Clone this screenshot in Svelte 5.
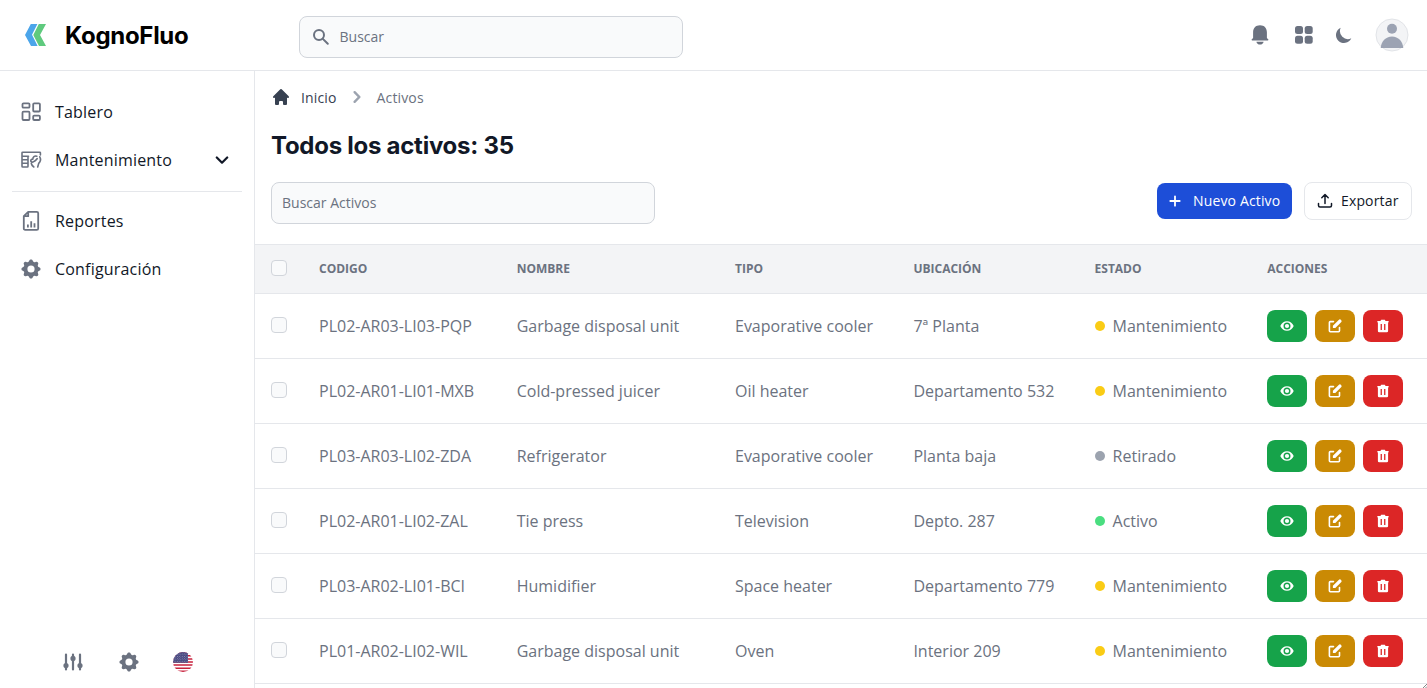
<script>
  const rows = [
    ['PL02-AR03-LI03-PQP', 'Garbage disposal unit', 'Evaporative cooler', '7ª Planta', 'Mantenimiento', 'yellow'],
    ['PL02-AR01-LI01-MXB', 'Cold-pressed juicer', 'Oil heater', 'Departamento 532', 'Mantenimiento', 'yellow'],
    ['PL03-AR03-LI02-ZDA', 'Refrigerator', 'Evaporative cooler', 'Planta baja', 'Retirado', 'gray'],
    ['PL02-AR01-LI02-ZAL', 'Tie press', 'Television', 'Depto. 287', 'Activo', 'green'],
    ['PL03-AR02-LI01-BCI', 'Humidifier', 'Space heater', 'Departamento 779', 'Mantenimiento', 'yellow'],
    ['PL01-AR02-LI02-WIL', 'Garbage disposal unit', 'Oven', 'Interior 209', 'Mantenimiento', 'yellow']
  ];
  const heads = ['Codigo', 'Nombre', 'Tipo', 'Ubicación', 'Estado', 'Acciones'];
  const gear = 'M11.49 3.17c-.38-1.56-2.6-1.56-2.98 0a1.532 1.532 0 01-2.286.948c-1.372-.836-2.942.734-2.106 2.106.54.886.061 2.042-.947 2.287-1.561.379-1.561 2.6 0 2.978a1.532 1.532 0 01.947 2.287c-.836 1.372.734 2.942 2.106 2.106a1.532 1.532 0 012.287.947c.379 1.561 2.6 1.561 2.978 0a1.533 1.533 0 012.287-.947c1.372.836 2.942-.734 2.106-2.106a1.533 1.533 0 01.947-2.287c1.561-.379 1.561-2.6 0-2.978a1.532 1.532 0 01-.947-2.287c.836-1.372-.734-2.942-2.106-2.106a1.532 1.532 0 01-2.287-.947zM10 13a3 3 0 100-6 3 3 0 000 6z';
</script>

{#snippet cog()}
  <svg class="i24" viewBox="0 0 20 20" fill="currentColor"><path fill-rule="evenodd" d={gear} /></svg>
{/snippet}

<div class="page">
  <header>
    <div class="brand">
      <svg class="logo" viewBox="0 0 22 22"><path fill="#4ba5ea" d="M5.800 0H12.400L7 10.700 12.600 22H6L0 11z" /><path fill="#5fca7e" d="M13.800 0H21l-6 11 6 11h-7L8.300 11z" /></svg>
      <span class="name">KognoFluo</span>
    </div>
    <div class="field search">
      <svg class="i20" viewBox="0 0 20 20" fill="none" stroke="#6b7280" stroke-width="2"><circle cx="8" cy="8" r="5" /><path d="M11.6 11.6l5.2 5.2" stroke-linecap="round" /></svg>
      <span>Buscar</span>
    </div>
    <div class="tools">
      <svg class="bell" viewBox="0 0 24 24" fill="currentColor"><path d="M12 2.200c-4.400 0-6.900 2.800-6.900 7v5.900l-1.300 1.200c-.5.500-.2 1.200.4 1.200h15.600c.6 0 .9-.7.4-1.200l-1.300-1.200V9.200c0-4.200-2.500-7-6.900-7zM8.400 18.700h7.200c-.3 1.800-1.700 2.900-3.600 2.900s-3.300-1.100-3.600-2.900z" /></svg>
      <svg class="grid" viewBox="0 0 18 18" fill="currentColor"><rect width="8" height="8" rx="2.500" /><rect x="9.700" width="8" height="8" rx="2.500" /><rect y="9.700" width="8" height="8" rx="2.500" /><rect x="9.700" y="9.700" width="8" height="8" rx="2.500" /></svg>
      <svg class="moon" viewBox="0 0 20 20" fill="currentColor"><path d="M17.293 13.293A8 8 0 016.707 2.707a8.001 8.001 0 1010.586 10.586z" /></svg>
      <svg class="avatar" viewBox="0 0 34 34"><circle cx="17" cy="17" r="16" fill="#f3f4f6" stroke="#e2e4e8" /><circle cx="17" cy="10.700" r="5" fill="#9ca3b3" /><path d="M5.700 30c.4-6.500 5-11.500 11.300-11.500s10.900 5 11.300 11.500z" fill="#9ca3b3" /></svg>
    </div>
  </header>

  <div class="body">
    <aside>
      <nav>
        <div class="item"><svg class="i24" viewBox="0 0 24 24" fill="none" stroke="currentColor" stroke-width="1.800"><rect x="3.500" y="3.300" width="7" height="4.400" rx="1" /><rect x="14.200" y="3.300" width="6.700" height="8.200" rx="1" /><rect x="3.500" y="11.700" width="7" height="8.300" rx="1" /><rect x="14.200" y="15.600" width="6.700" height="4.400" rx="1" /></svg><span>Tablero</span></div>
        <div class="item"><svg class="i24" viewBox="0 0 24 24" fill="none" stroke="currentColor" stroke-width="1.600" stroke-linejoin="round" stroke-linecap="round"><path d="M3 8.300V4.800q0-.6.700-.6h17q.7 0 .7.600v2.200M3 8.300h6.500M3 8.300v10q0 .7.700.7h4.600q.7 0 .7-.7v-10M3 11.700h6M3 15.300h6" /><path d="M17.800 8.200c-2.300-.6-4 .8-3.900 2.900-1.300-.1-2.400.7-2.100 1.900.2 1 1.500 1.500 2.500.9l2.200-1.400 1.700-1.900M20.800 8.800c1.200 2.400.6 4.900-1.100 6.600l-1 3.600M12.300 15.500c.3 1.500 1.200 2.600 2.500 3.500" /></svg><span>Mantenimiento</span><svg class="chev" viewBox="0 0 14 9" fill="none" stroke="#111827" stroke-width="2.200" stroke-linecap="round" stroke-linejoin="round"><path d="M1.800 1.500L7 6.700l5.200-5.200" /></svg></div>
        <hr />
        <div class="item"><svg class="i24" viewBox="0 0 24 24" fill="none" stroke="currentColor" stroke-width="1.800"><path d="M9.200 2.800h8.600q1.400 0 1.400 1.400v15.200q0 1.400-1.400 1.400H6.200q-1.400 0-1.400-1.400V7.200zM9.200 2.800v4.400H4.800" stroke-linejoin="round" /><path d="M8.900 15.600v3M12.200 12.300v6.300M15.500 14.300v4.300" /></svg><span>Reportes</span></div>
        <div class="item">{@render cog()}<span>Configuración</span></div>
      </nav>
      <div class="bottom">
        <svg class="sliders" viewBox="0 0 20 18" fill="currentColor" stroke="currentColor" stroke-width="2.200" stroke-linecap="round"><path d="M3 1.500v15M10 1.500v15M17 1.500v15" /><circle cx="3" cy="12.600" r="1.500" /><circle cx="10" cy="5.400" r="1.500" /><circle cx="17" cy="12.600" r="1.500" /></svg>
        {@render cog()}
        <svg class="flag" viewBox="0 0 20 20"><defs><clipPath id="disc"><circle cx="10" cy="10" r="10" /></clipPath><pattern id="stars" width="2.400" height="2.400" patternUnits="userSpaceOnUse"><circle cx=".7" cy=".7" r=".38" fill="#fff" /><circle cx="1.900" cy="1.900" r=".38" fill="#fff" /></pattern></defs><g clip-path="url(#disc)"><path fill="#fff" d="M0 0h20v20H0z" /><path stroke="#c8203c" stroke-width="1.540" d="M0 .77h20M0 3.850h20M0 6.930h20M0 10h20M0 13.080h20M0 16.150h20M0 19.230h20" /><path fill="#46467f" d="M0 0h15v10.800H0z" /><path fill="url(#stars)" d="M0 0h15v10.800H0z" /></g></svg>
      </div>
    </aside>

    <main>
      <div class="crumbs">
        <svg class="i20" viewBox="0 0 20 20" fill="#374151"><path d="M10.707 2.293a1 1 0 00-1.414 0l-7 7a1 1 0 001.414 1.414L4 10.414V17a1 1 0 001 1h2a1 1 0 001-1v-2a1 1 0 011-1h2a1 1 0 011 1v2a1 1 0 001 1h2a1 1 0 001-1v-6.586l.293.293a1 1 0 001.414-1.414l-7-7z" /></svg>
        <span class="home">Inicio</span>
        <svg class="sep" viewBox="0 0 24 24" fill="#9ca3af"><path fill-rule="evenodd" transform="scale(1.200)" d="M7.293 14.707a1 1 0 010-1.414L10.586 10 7.293 6.707a1 1 0 011.414-1.414l4 4a1 1 0 010 1.414l-4 4a1 1 0 01-1.414 0z" /></svg>
        <span class="here">Activos</span>
      </div>
      <h1>Todos los activos: 35</h1>
      <div class="bar">
        <div class="field filter"><span>Buscar Activos</span></div>
        <div class="buttons">
          <button class="new"><svg viewBox="0 0 12 12" stroke="#fff" stroke-width="1.800" stroke-linecap="round"><path d="M6 1.300v9.400M1.300 6h9.400" /></svg>Nuevo Activo</button>
          <button class="export"><svg viewBox="0 0 16 16" fill="none" stroke="#111827" stroke-width="1.500" stroke-linecap="round" stroke-linejoin="round"><path d="M8 10.500V1.800M4.800 4.700L8 1.500l3.200 3.200M1.500 10.500v2q0 1.500 1.500 1.500h10q1.500 0 1.500-1.500v-2" /></svg>Exportar</button>
        </div>
      </div>
      <div class="table">
        <div class="row head"><span class="box"></span>{#each heads as h}<span class="label">{h}</span>{/each}</div>
        {#each rows as r}
          <div class="row">
            <span class="box"></span><span>{r[0]}</span><span>{r[1]}</span><span>{r[2]}</span><span>{r[3]}</span>
            <span class="state"><i class={r[5]}></i>{r[4]}</span>
            <span class="actions">
              <b class="view"><svg viewBox="0 0 16 16"><path fill="#fff" fill-rule="evenodd" d="M1.300 8C2.600 5 5 3.300 8 3.300S13.400 5 14.700 8C13.400 11 11 12.700 8 12.700S2.600 11 1.300 8zm3.200 0a3.500 3.500 0 107 0 3.500 3.500 0 00-7 0z" /><circle cx="8" cy="8" r="2.100" fill="#fff" /></svg></b>
              <b class="edit"><svg viewBox="0 0 16 16"><path fill="none" stroke="#fff" stroke-width="1.600" stroke-linecap="round" stroke-linejoin="round" d="M6.500 3.600H3.300q-.9 0-.9.900v8.300q0 .9.900.9h8.300q.9 0 .9-.9V9.600" /><path fill="#fff" d="M11.700 1.900a1.650 1.650 0 012.400 2.400L8.300 10.100H5.900V7.700z" /></svg></b>
              <b class="del"><svg viewBox="0 0 16 16"><path fill="#fff" fill-rule="evenodd" d="M6.200 1.700h3.600l.8 1.400h2.500q.7 0 .7.750T13.100 4.600v8.400q0 1.300-1.300 1.300H4.200q-1.300 0-1.300-1.300V4.600q-.7 0-.7-.75t.7-.75h2.500zM5.600 6.100v5.900h1.300V6.100zm3.500 0v5.900h1.300V6.100z" /></svg></b>
            </span>
          </div>
        {/each}
      </div>
    </main>
  </div>
  <svg class="grip" viewBox="0 0 4 4" stroke="#777" stroke-width=".9"><path d="M0 4L4 0M2.500 4L4 2.500" /></svg>
</div>

<style>
  :global(body) { background: #fff; overflow: hidden; }
  .page { position: relative; width: 1427px; height: 688px; display: flex; flex-direction: column; overflow: hidden; box-sizing: border-box; font-family: "Open Sans", "Noto Sans", sans-serif; color: #111827; font-size: 16px; }
  .page * { box-sizing: border-box; }
  svg { display: block; flex: none; }
  .grip { position: absolute; right: 0; bottom: 0; width: 4px; height: 4px; }
  .i20 { width: 20px; height: 20px; }
  .i24 { width: 24px; height: 24px; }
  header { height: 71px; flex: none; border-bottom: 1px solid #e5e7eb; display: flex; align-items: center; }
  .brand { width: 298.500px; padding-left: 25px; display: flex; align-items: center; gap: 18px; }
  .logo { width: 22px; height: 22px; }
  .name { font: 700 24px/32px Inter, sans-serif; letter-spacing: -.3px; color: #000; white-space: nowrap; padding-top: 1px; }
  .field { width: 384px; height: 42px; border: 1px solid #d1d5db; border-radius: 8px; background: #f9fafb; color: #6b7280; font-size: 14px; display: flex; align-items: center; }
  .search { margin-top: 3px; padding-left: 11px; gap: 9px; }
  .tools { margin-left: auto; padding-right: 18px; color: #6b7280; display: flex; align-items: center; }
  .bell { width: 24px; height: 24px; margin-right: 23px; }
  .grid { width: 18px; height: 18px; margin-right: 21px; }
  .moon { width: 20px; height: 20px; margin-right: 21.300px; }
  .avatar { width: 34px; height: 34px; }
  .body { flex: 1; display: flex; min-height: 0; }
  aside { width: 255px; border-right: 1px solid #e5e7eb; display: flex; flex-direction: column; justify-content: space-between; padding: 21px 12px 14px; }
  .item { height: 40px; margin-bottom: 8px; padding-left: 7px; display: flex; align-items: center; gap: 12px; font-weight: 500; letter-spacing: .19px; }
  .item .i24, .bottom { color: #6b7280; }
  .chev { width: 14px; height: 9px; margin-left: auto; margin-right: 13px; }
  hr { border: 0; height: 1px; background: #e5e7eb; margin: 11px 0 9px; }
  .bottom { height: 24px; display: flex; align-items: center; padding-left: 51px; }
  .sliders { width: 20px; height: 18px; margin-right: 34px; }
  .flag { width: 20px; height: 20px; margin-left: 32px; }
  main { flex: 1; min-width: 0; }
  .crumbs { height: 24px; margin-top: 14px; padding-left: 16px; display: flex; align-items: center; font-size: 14px; font-weight: 500; letter-spacing: .14px; }
  .home { margin-left: 10px; color: #374151; }
  .sep { width: 24px; height: 24px; margin: 0 8px; }
  .here { color: #6b7280; }
  h1 { margin: 21px 16px 0; font: 700 24px/32px Inter, sans-serif; letter-spacing: -.26px; width: max-content; }
  .bar { display: flex; justify-content: space-between; padding: 19.500px 15px 0 16px; height: 82px; }
  .filter { padding-left: 10px; }
  .buttons { display: flex; gap: 12px; }
  button { font: inherit; font-size: 14px; font-weight: 500; letter-spacing: .15px; border-radius: 8px; display: flex; align-items: center; white-space: nowrap; padding: 0; }
  .new { width: 135px; height: 36px; margin-top: 1px; border: 0; background: #1d4ed8; color: #fff; padding-left: 12px; }
  .new svg { width: 12px; height: 12px; margin-right: 12px; }
  .export { width: 108px; height: 38px; border: 1px solid #e5e7eb; background: #fff; color: #111827; padding-left: 12px; }
  .export svg { width: 16px; height: 16px; margin-right: 8px; }
  .row { display: grid; grid-template-columns: 48px 197.700px 218.300px 178.400px 181.200px 172.700px 1fr; align-items: center; height: 65px; padding-left: 16px; border-bottom: 1px solid #e5e7eb; color: #6b7280; white-space: nowrap; }
  .head { height: 50px; border-top: 1px solid #e5e7eb; background: #f3f4f6; font-size: 12px; font-weight: 700; text-transform: uppercase; }
  .label { padding-bottom: 1px; }
  .box { width: 16px; height: 16px; border: 1px solid #d1d5db; border-radius: 4px; background: #f9fafb; margin-bottom: 2px; }
  .state { display: flex; align-items: center; }
  i { width: 10px; height: 10px; border-radius: 50%; margin-right: 8px; margin-bottom: 1px; }
  .yellow { background: #facc15; }
  .gray { background: #9ca3af; }
  .green { background: #4ade80; }
  .actions { display: flex; gap: 8px; padding-bottom: 1px; }
  b { width: 40px; height: 32px; border-radius: 8px; display: grid; place-items: center; }
  b svg { width: 16px; height: 16px; }
  .view { background: #16a34a; }
  .edit { background: #ca8a04; }
  .del { background: #dc2626; }
</style>
